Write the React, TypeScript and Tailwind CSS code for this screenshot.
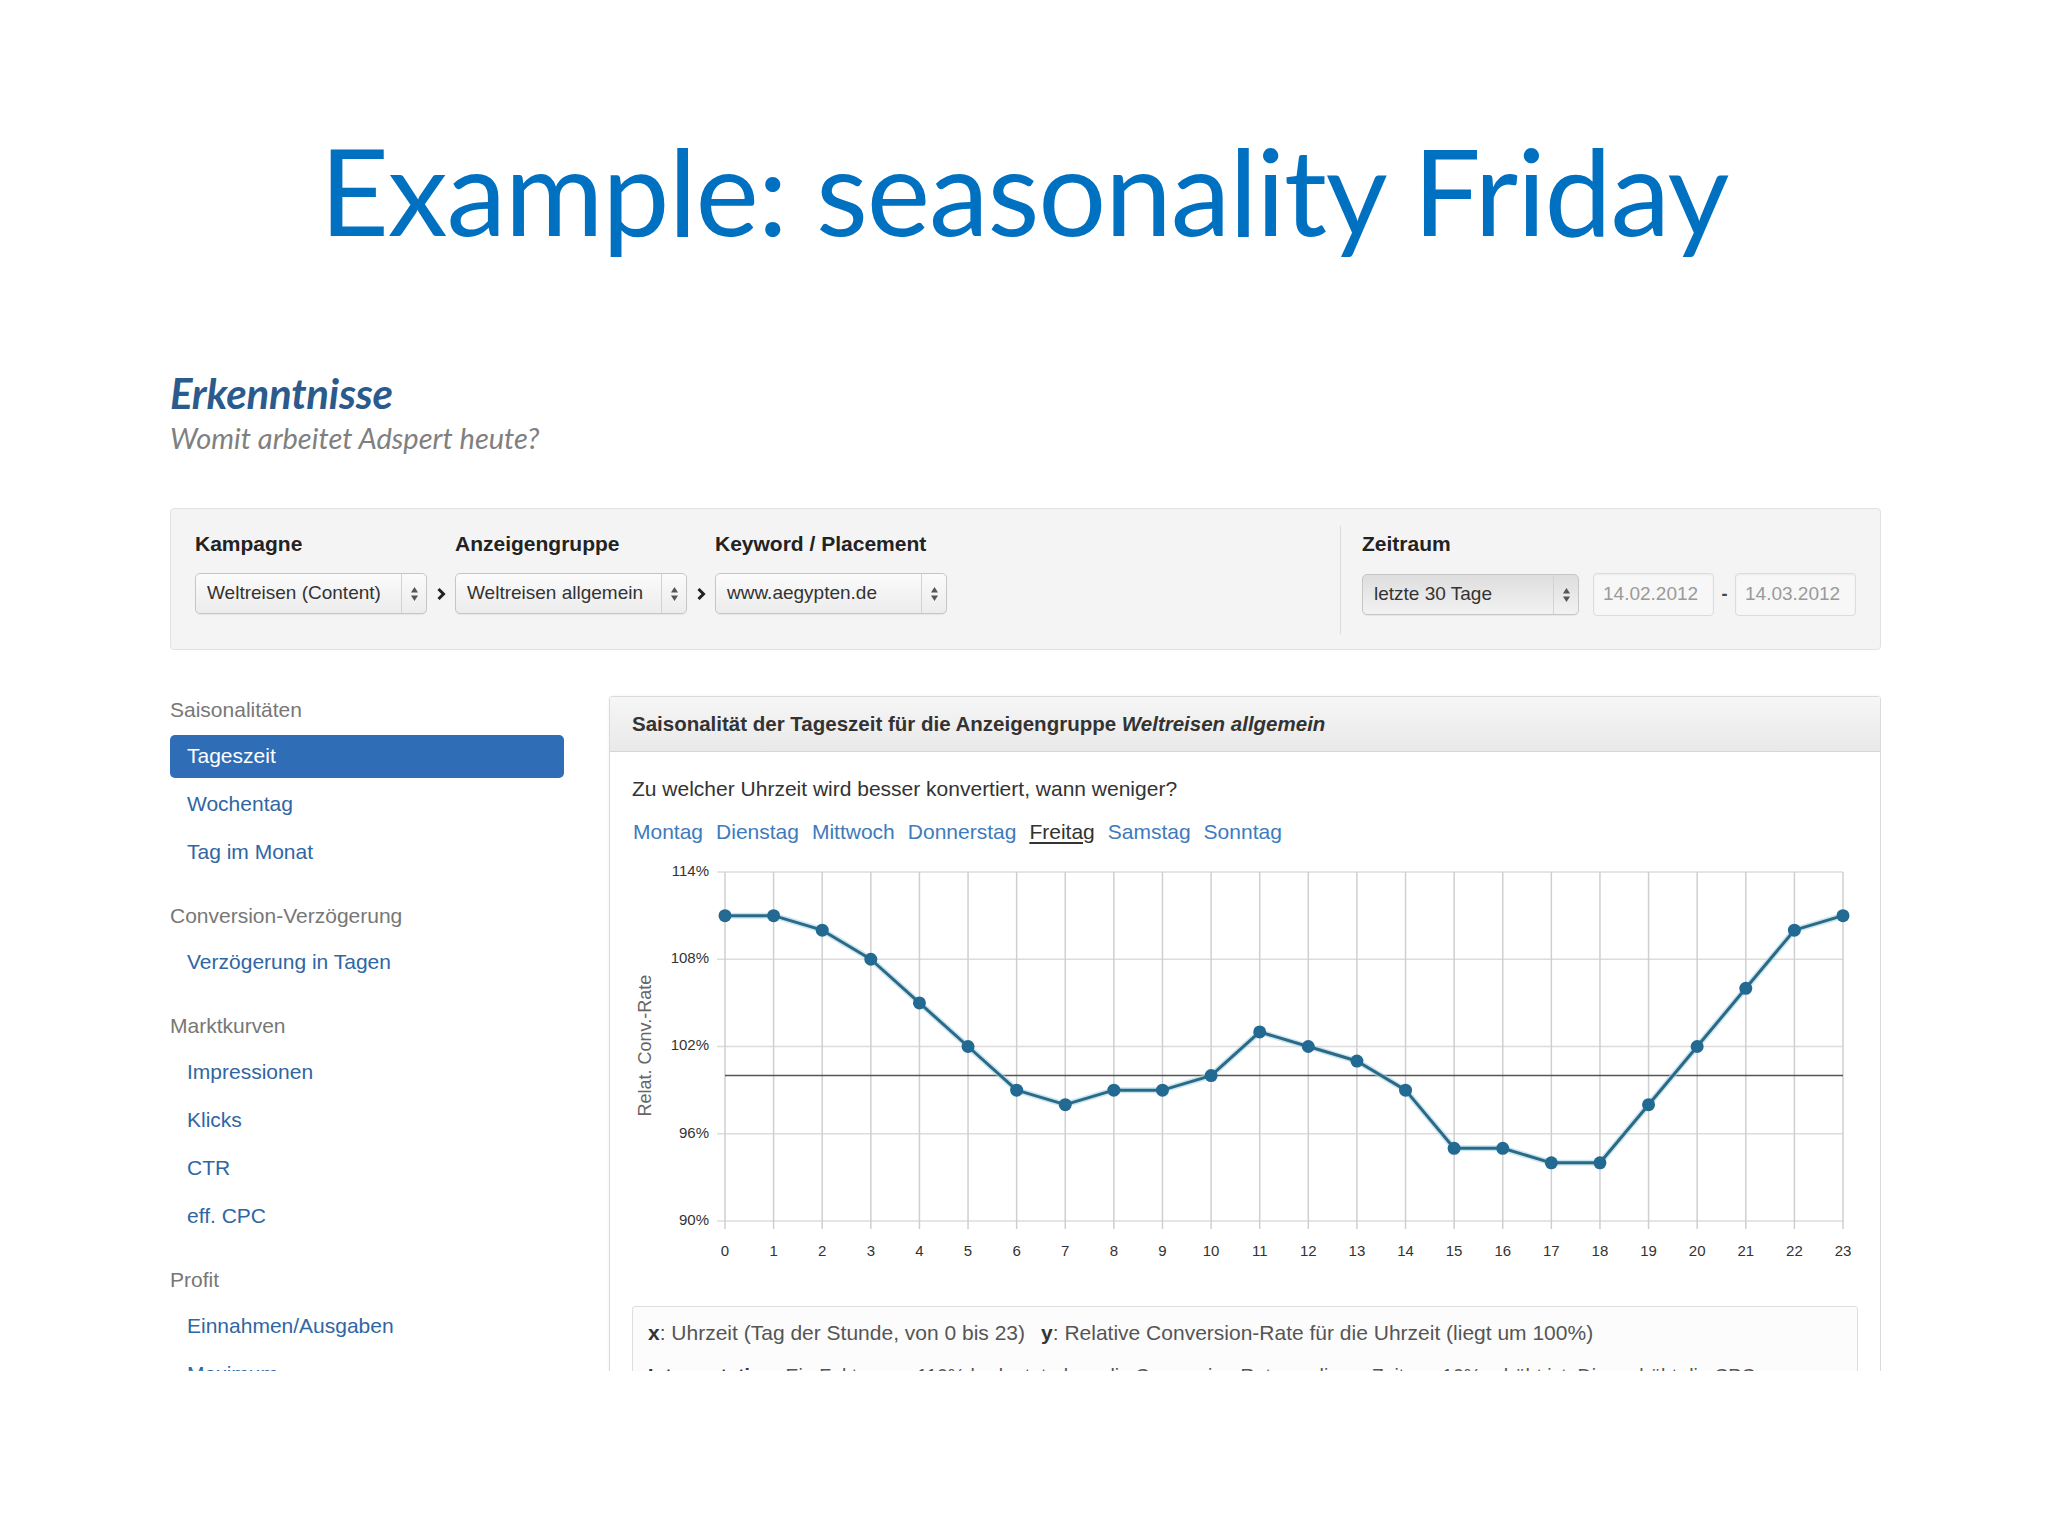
import React from "react";

const values = [111, 111, 110, 108, 105, 102, 99, 98, 99, 99, 100, 103, 102, 101, 99, 95, 95, 94, 94, 98, 102, 106, 110, 111];

const ui = "font-['Liberation_Sans',Arial,sans-serif]";

function UpDown() {
  return (
    <svg width="9" height="16" viewBox="0 0 9 16">
      <path d="M4.5 1 L8 6.5 L1 6.5 Z" fill="#555" />
      <path d="M4.5 15 L8 9.5 L1 9.5 Z" fill="#555" />
    </svg>
  );
}

function Crumb() {
  return (
    <div className="flex w-[28px] justify-center">
      <svg width="10" height="14" viewBox="0 0 10 14">
        <path d="M2.5 2 L7.5 7 L2.5 12" fill="none" stroke="#222" strokeWidth="3" />
      </svg>
    </div>
  );
}

function Select({ label, width, dark }: { label: string; width: string; dark?: boolean }) {
  return (
    <div
      className={`flex h-[41px] items-stretch rounded-[5px] border border-[#c6c6c6] shadow-[0_1px_1px_rgba(0,0,0,0.06)] ${width} ${
        dark ? "bg-gradient-to-b from-[#dedede] to-[#f2f2f2]" : "bg-gradient-to-b from-[#fbfbfb] to-[#ececec]"
      }`}
    >
      <div className="flex flex-1 items-center overflow-hidden whitespace-nowrap pl-[11px] text-[19px] text-[#333]">{label}</div>
      <div className="flex w-[25px] items-center justify-center border-l border-[#d2d2d2]">
        <UpDown />
      </div>
    </div>
  );
}

function Field({ label, children }: { label: string; children: React.ReactNode }) {
  return (
    <div className="flex flex-col">
      <div className="h-[24px] text-[21px] leading-[24px] font-bold text-[#222]">{label}</div>
      <div className="mt-[17px] flex items-center">{children}</div>
    </div>
  );
}

function DateBox({ value }: { value: string }) {
  return (
    <div className="flex h-[43px] w-[121px] items-center rounded-[4px] border border-[#dcdcdc] bg-[#f7f7f7] px-[9px] text-[19px] text-[#9a9a9a] shadow-[inset_0_1px_2px_rgba(0,0,0,0.05)]">
      {value}
    </div>
  );
}

function Chart() {
  const x0 = 115;
  const x1 = 1233;
  const top = 22;
  const bottom = 371;
  const xs = (h: number) => x0 + (h * (x1 - x0)) / 23;
  const ys = (v: number) => top + ((114 - v) * (bottom - top)) / 24;
  const ticks = [114, 108, 102, 96, 90];
  const pts = values.map((v, i) => `${xs(i)},${ys(v)}`).join(" ");

  return (
    <svg width="1270" height="420" viewBox="0 0 1270 420" className="block">
      {ticks.map((t) => (
        <g key={t}>
          <line x1={x0 - 8} x2={x1} y1={ys(t)} y2={ys(t)} stroke="#dcdcdc" strokeWidth="1.5" />
          <text x="99" y={ys(t)} textAnchor="end" dominantBaseline="middle" fontSize="15" fill="#333" fontFamily="Liberation Sans, Arial, sans-serif">
            {t}%
          </text>
        </g>
      ))}
      {values.map((_, i) => (
        <g key={i}>
          <line x1={xs(i)} x2={xs(i)} y1={top} y2={bottom + 8} stroke="#cfcfcf" strokeWidth="1.5" />
          <text x={xs(i)} y="402" textAnchor="middle" dominantBaseline="middle" fontSize="15" fill="#333" fontFamily="Liberation Sans, Arial, sans-serif">
            {i}
          </text>
        </g>
      ))}
      <line x1={x0} x2={x1} y1={ys(100)} y2={ys(100)} stroke="#555" strokeWidth="1.5" />
      <text
        x="0"
        y="0"
        transform={`translate(36 ${ys(100) - 30}) rotate(-90)`}
        textAnchor="middle"
        dominantBaseline="middle"
        fontSize="18"
        fill="#666"
        fontFamily="Liberation Sans, Arial, sans-serif"
      >
        Relat. Conv.-Rate
      </text>
      <polyline points={pts} fill="none" stroke="#a9d4e6" strokeWidth="6" strokeLinejoin="round" opacity="0.6" />
      <polyline points={pts} fill="none" stroke="#2b6a86" strokeWidth="3" strokeLinejoin="round" />
      {values.map((v, i) => (
        <circle key={i} cx={xs(i)} cy={ys(v)} r="6.5" fill="#236a93" />
      ))}
    </svg>
  );
}

type NavGroup = { title: string; items: string[] };

const nav: NavGroup[] = [
  { title: "Saisonalitäten", items: ["Tageszeit", "Wochentag", "Tag im Monat"] },
  { title: "Conversion-Verzögerung", items: ["Verzögerung in Tagen"] },
  { title: "Marktkurven", items: ["Impressionen", "Klicks", "CTR", "eff. CPC"] },
  { title: "Profit", items: ["Einnahmen/Ausgaben", "Maximum"] },
];

function Sidebar() {
  return (
    <div className="flex w-[394px] shrink-0 flex-col gap-[18px]">
      {nav.map((g) => (
        <div key={g.title} className="flex flex-col">
          <div className="flex h-[44px] items-center text-[21px] text-[#777]">{g.title}</div>
          {g.items.map((it) =>
            it === "Tageszeit" ? (
              <div key={it} className="flex h-[48px] items-center">
                <div className="flex h-[43px] w-full items-center rounded-[5px] bg-[#2f6db7] pl-[17px] text-[21px] text-white">{it}</div>
              </div>
            ) : (
              <div key={it} className="flex h-[48px] items-center pl-[17px] text-[21px] text-[#2f66a3]">
                {it}
              </div>
            )
          )}
        </div>
      ))}
    </div>
  );
}

const days = ["Montag", "Dienstag", "Mittwoch", "Donnerstag", "Freitag", "Samstag", "Sonntag"];

function Panel() {
  return (
    <div className="mt-[8px] w-[1272px] shrink-0 rounded-t-[4px] border border-b-0 border-[#dadada] bg-white shadow-[0_0_3px_rgba(0,0,0,0.06)]">
      <div className="flex h-[55px] items-center border-b border-[#d6d6d6] bg-gradient-to-b from-[#f6f6f6] to-[#e9e9e9] pl-[22px] text-[20.5px] font-bold text-[#333]">
        Saisonalität der Tageszeit für die Anzeigengruppe&nbsp;<span className="italic">Weltreisen allgemein</span>
      </div>
      <div className="pl-[22px] pt-[25px] text-[21px] leading-[24px] text-[#333]">Zu welcher Uhrzeit wird besser konvertiert, wann weniger?</div>
      <div className="mt-[19px] flex gap-[13px] pl-[23px] text-[21px] leading-[24px]">
        {days.map((d) =>
          d === "Freitag" ? (
            <span key={d} className="text-[#333] underline underline-offset-[3px]">
              {d}
            </span>
          ) : (
            <span key={d} className="text-[#3d7bbd]">
              {d}
            </span>
          )
        )}
      </div>
      <div className="mt-[6px]">
        <Chart />
      </div>
      <div className="mx-[22px] mt-[36px] overflow-hidden rounded-[3px] border border-[#dedede] bg-[#fcfcfc] px-[15px] pt-[14px] text-[21px] leading-[24px] text-[#555]">
        <div className="flex gap-[16px]">
          <span>
            <b className="text-[#333]">x</b>: Uhrzeit (Tag der Stunde, von 0 bis 23)
          </span>
          <span>
            <b className="text-[#333]">y</b>: Relative Conversion-Rate für die Uhrzeit (liegt um 100%)
          </span>
        </div>
        <div className="mt-[19px] whitespace-nowrap text-[19.5px]">
          <b className="text-[#333]">Interpretation:</b> Ein Faktor von 110% bedeutet, dass die Conversion-Rate zu dieser Zeit um 10% erhöht ist. Dies erhöht die CPC
        </div>
      </div>
    </div>
  );
}

export default function App() {
  return (
    <div className={`relative h-[1536px] w-[2048px] overflow-hidden bg-white ${ui}`}>
      <div className="flex h-[370px] justify-center pt-[130px]">
        <h1 className="font-['Lato',sans-serif] text-[120px] leading-none tracking-[-0.01em] text-[#0070c0]">Example: seasonality Friday</h1>
      </div>
      <div className="ml-[170px] w-[1711px]">
        <div className="font-['Lato',sans-serif] text-[42px] leading-[46px] font-bold italic tracking-[-0.005em] text-[#2b5b8d]">Erkenntnisse</div>
        <div className="mt-[4px] font-['Lato',sans-serif] text-[29px] leading-[36px] italic text-[#808080]">Womit arbeitet Adspert heute?</div>
        <div className="mt-[52px] flex h-[142px] items-start rounded-[4px] border border-[#e2e2e2] bg-[#f4f4f5] pl-[24px] pr-[24px] pt-[23px]">
          <Field label="Kampagne">
            <Select label="Weltreisen (Content)" width="w-[232px]" />
            <Crumb />
          </Field>
          <Field label="Anzeigengruppe">
            <Select label="Weltreisen allgemein" width="w-[232px]" />
            <Crumb />
          </Field>
          <Field label="Keyword / Placement">
            <Select label="www.aegypten.de" width="w-[232px]" />
          </Field>
          <div className="ml-auto mt-[-6px] h-[108px] w-px bg-[#dcdcdc]" />
          <div className="pl-[21px]">
            <Field label="Zeitraum">
              <Select label="letzte 30 Tage" width="w-[217px]" dark />
              <div className="w-[14px]" />
              <DateBox value="14.02.2012" />
              <div className="flex w-[21px] justify-center text-[18px] font-bold text-[#444]">-</div>
              <DateBox value="14.03.2012" />
            </Field>
          </div>
        </div>
        <div className="mt-[38px] flex h-[683px] items-start gap-[45px] overflow-hidden">
          <Sidebar />
          <Panel />
        </div>
      </div>
    </div>
  );
}
